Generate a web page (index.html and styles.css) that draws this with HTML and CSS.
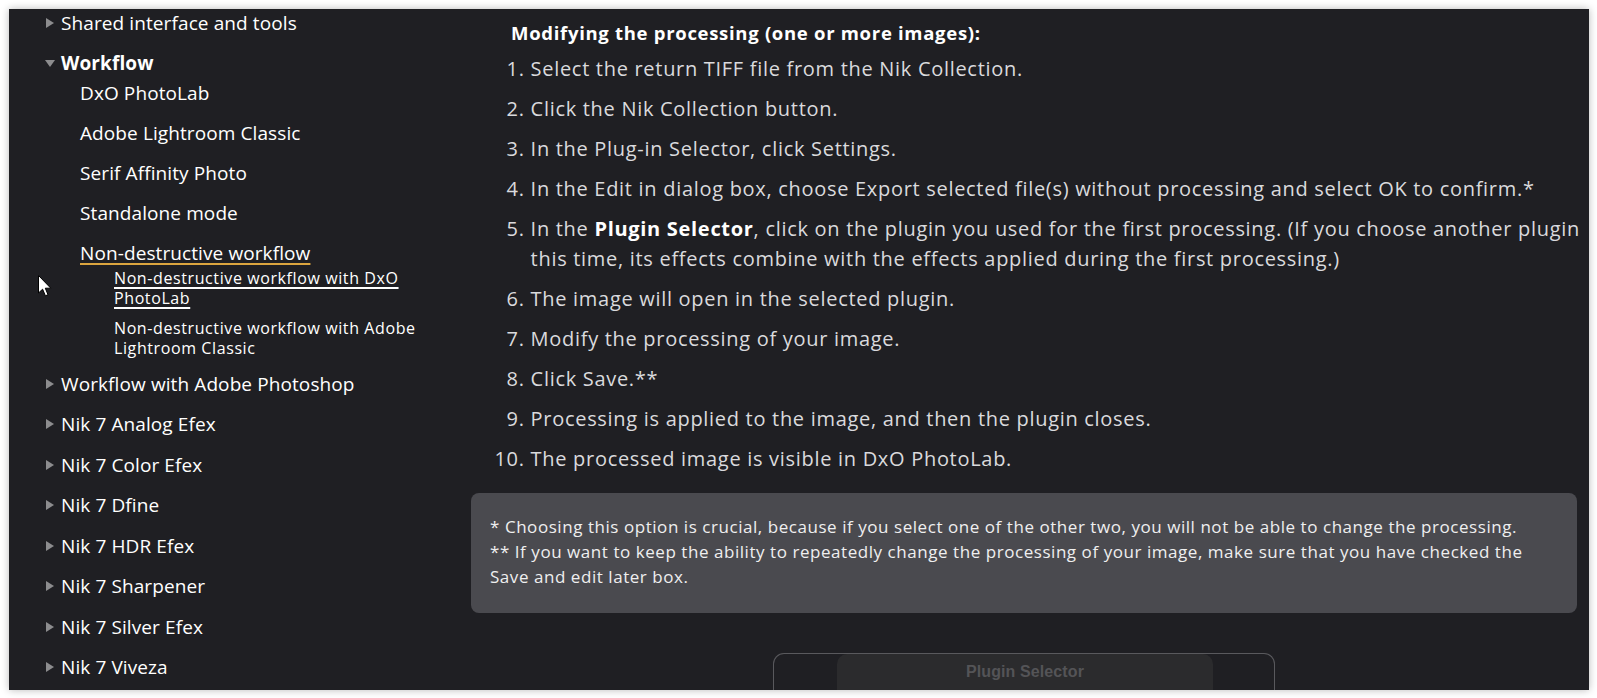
FILE: index.html
```html
<!DOCTYPE html>
<html lang="en">
<head>
<meta charset="utf-8">
<title>Workflow - Non-destructive workflow with DxO PhotoLab</title>
<link rel="stylesheet" href="styles.css">
</head>
<body>
<div class="panel">
  <nav class="toc">
    <ul class="toc-l1">
      <li><div class="row"><span class="tri"><i class="tri-right"></i></span><a>Shared interface and tools</a></div></li>
      <li>
        <div class="row"><span class="tri"><i class="tri-down"></i></span><a class="strong">Workflow</a></div>
        <ul class="toc-l2">
          <li><a>DxO PhotoLab</a></li>
          <li><a>Adobe Lightroom Classic</a></li>
          <li><a>Serif Affinity Photo</a></li>
          <li><a>Standalone mode</a></li>
          <li>
            <a class="active-parent">Non-destructive workflow</a>
            <ul class="toc-l3">
              <li><a class="active">Non-destructive workflow with DxO PhotoLab</a></li>
              <li><a>Non-destructive workflow with Adobe Lightroom Classic</a></li>
            </ul>
          </li>
        </ul>
      </li>
      <li><div class="row"><span class="tri"><i class="tri-right"></i></span><a>Workflow with Adobe Photoshop</a></div></li>
      <li><div class="row"><span class="tri"><i class="tri-right"></i></span><a>Nik 7 Analog Efex</a></div></li>
      <li><div class="row"><span class="tri"><i class="tri-right"></i></span><a>Nik 7 Color Efex</a></div></li>
      <li><div class="row"><span class="tri"><i class="tri-right"></i></span><a>Nik 7 Dfine</a></div></li>
      <li><div class="row"><span class="tri"><i class="tri-right"></i></span><a>Nik 7 HDR Efex</a></div></li>
      <li><div class="row"><span class="tri"><i class="tri-right"></i></span><a>Nik 7 Sharpener</a></div></li>
      <li><div class="row"><span class="tri"><i class="tri-right"></i></span><a>Nik 7 Silver Efex</a></div></li>
      <li><div class="row"><span class="tri"><i class="tri-right"></i></span><a>Nik 7 Viveza</a></div></li>
    </ul>
  </nav>

  <main class="content">
    <h3 class="subhead">Modifying the processing (one or more images):</h3>
    <ol class="steps">
      <li>Select the return TIFF file from the Nik Collection.</li>
      <li>Click the Nik Collection button.</li>
      <li>In the Plug-in Selector, click Settings.</li>
      <li>In the Edit in dialog box, choose Export selected file(s) without processing and select OK to confirm.*</li>
      <li>In the <b>Plugin Selector</b>, click on the plugin you used for the first processing. (If you choose another plugin this time, its effects combine with the effects applied during the first processing.)</li>
      <li>The image will open in the selected plugin.</li>
      <li>Modify the processing of your image.</li>
      <li>Click Save.**</li>
      <li>Processing is applied to the image, and then the plugin closes.</li>
      <li>The processed image is visible in DxO PhotoLab.</li>
    </ol>
    <div class="note">
      <p>* Choosing this option is crucial, because if you select one of the other two, you will not be able to change the processing.</p>
      <p>** If you want to keep the ability to repeatedly change the processing of your image, make sure that you have checked the Save and edit later box.</p>
    </div>
    <div class="shot">
      <div class="shot-side"></div>
      <div class="shot-bar"><span>Plugin Selector</span></div>
      <div class="shot-rest"></div>
    </div>
  </main>

  <svg class="cursor" width="14" height="22" viewBox="0 0 14 22" aria-hidden="true">
    <path d="M0.5 0.5 L0.5 18 L4.6 14.2 L7.4 20.8 L10 19.7 L7.3 13.2 L12.8 13.2 Z" fill="#fff" stroke="#000" stroke-width="1" stroke-linejoin="miter"/>
  </svg>
</div>
</body>
</html>
```
FILE: styles.css
```css
html, body {
  margin: 0;
  background: #ffffff;
}
body {
  padding: 9px 8px 8px 9px;
  font-family: "Open Sans", "Noto Sans", sans-serif;
}
.panel {
  position: relative;
  width: 1580px;
  height: 681px;
  background: #1f1f23;
  box-shadow: 0 0 8px rgba(0, 0, 0, 0.28);
  overflow: hidden;
  display: flex;
  align-items: flex-start;
}

/* ---------- table of contents ---------- */
.toc {
  flex: 0 0 430px;
  box-sizing: border-box;
  padding: 0 10px 0 35px;
  color: #ffffff;
}
.toc ul {
  list-style: none;
  margin: 0;
  padding: 0;
}
.toc a {
  color: #ffffff;
  text-decoration: none;
}
.toc-l1 {
  margin-top: -1.5px !important;
  font-size: 19px;
  letter-spacing: 0.1px;
}
.toc-l1 > li {
  margin-bottom: 10.5px;
}
.row {
  display: flex;
  align-items: center;
  height: 30px;
  line-height: 30px;
}
.tri {
  flex: 0 0 11px;
  display: flex;
  justify-content: center;
  align-items: center;
  margin-right: 6px;
}
.tri-right {
  width: 0;
  height: 0;
  border-left: 8px solid #8c8c8e;
  border-top: 5px solid transparent;
  border-bottom: 5px solid transparent;
}
.tri-down {
  width: 0;
  height: 0;
  border-top: 7px solid #8c8c8e;
  border-left: 5.5px solid transparent;
  border-right: 5.5px solid transparent;
}
.strong {
  font-weight: 700;
}
.toc-l2 {
  padding-left: 36px !important;
}
.toc-l2 > li {
  line-height: 30px;
  margin-bottom: 10px;
}
.toc-l3 {
  padding-left: 34px !important;
  font-size: 16px;
  letter-spacing: 0.6px;
}
.toc-l3 > li {
  line-height: 20px;
  margin-bottom: 10px;
}
.toc .active-parent {
  text-decoration: underline;
  text-decoration-color: #dba53f;
  text-decoration-thickness: 1.5px;
  text-underline-offset: 3px;
}
.toc .active {
  text-decoration: underline;
  text-decoration-color: #ffffff;
  text-decoration-thickness: 1.5px;
  text-underline-offset: 3px;
}

/* ---------- main content ---------- */
.content {
  flex: 1 1 auto;
  box-sizing: border-box;
  padding: 9px 4px 0 32px;
  color: #dadadd;
}
.subhead {
  margin: 0 0 5.8px 0;
  padding-left: 40px;
  font-size: 18.5px;
  font-weight: 700;
  letter-spacing: 0.7px;
  line-height: 30px;
  color: #ffffff;
}
.steps {
  margin: 0 0 19.5px 0;
  padding-left: 59.6px;
  font-size: 20px;
  letter-spacing: 0.7px;
  line-height: 30px;
}
.steps li {
  margin-bottom: 10px;
  padding-left: 0;
}
.steps b {
  color: #ffffff;
  font-weight: 700;
}
.note {
  margin-right: 8px;
  padding: 21px 30px 23.5px 19px;
  background: #4a4a4f;
  border-radius: 8px;
  color: #efefef;
  font-size: 17px;
  letter-spacing: 0.55px;
  line-height: 25px;
}
.note p {
  margin: 0;
}
.shot {
  width: 502px;
  height: 100px;
  margin: 40.6px auto 0;
  box-sizing: border-box;
  border: 1px solid #59595d;
  border-bottom: 0;
  border-radius: 11px 11px 0 0;
  display: grid;
  grid-template-columns: 63px 376px 1fr;
  transform: translateX(-4px);
}
.shot-bar {
  background: #2b2b2d;
  border-radius: 10px 10px 0 0;
  display: flex;
  justify-content: center;
  align-items: flex-start;
  padding-top: 9px;
}
.shot-bar span {
  font-family: "Liberation Sans", Arial, sans-serif;
  font-weight: 700;
  font-size: 16px;
  color: #545457;
  letter-spacing: 0.1px;
}

/* ---------- mouse pointer overlay ---------- */
.cursor {
  position: absolute;
  left: 28.5px;
  top: 266px;
}
```
